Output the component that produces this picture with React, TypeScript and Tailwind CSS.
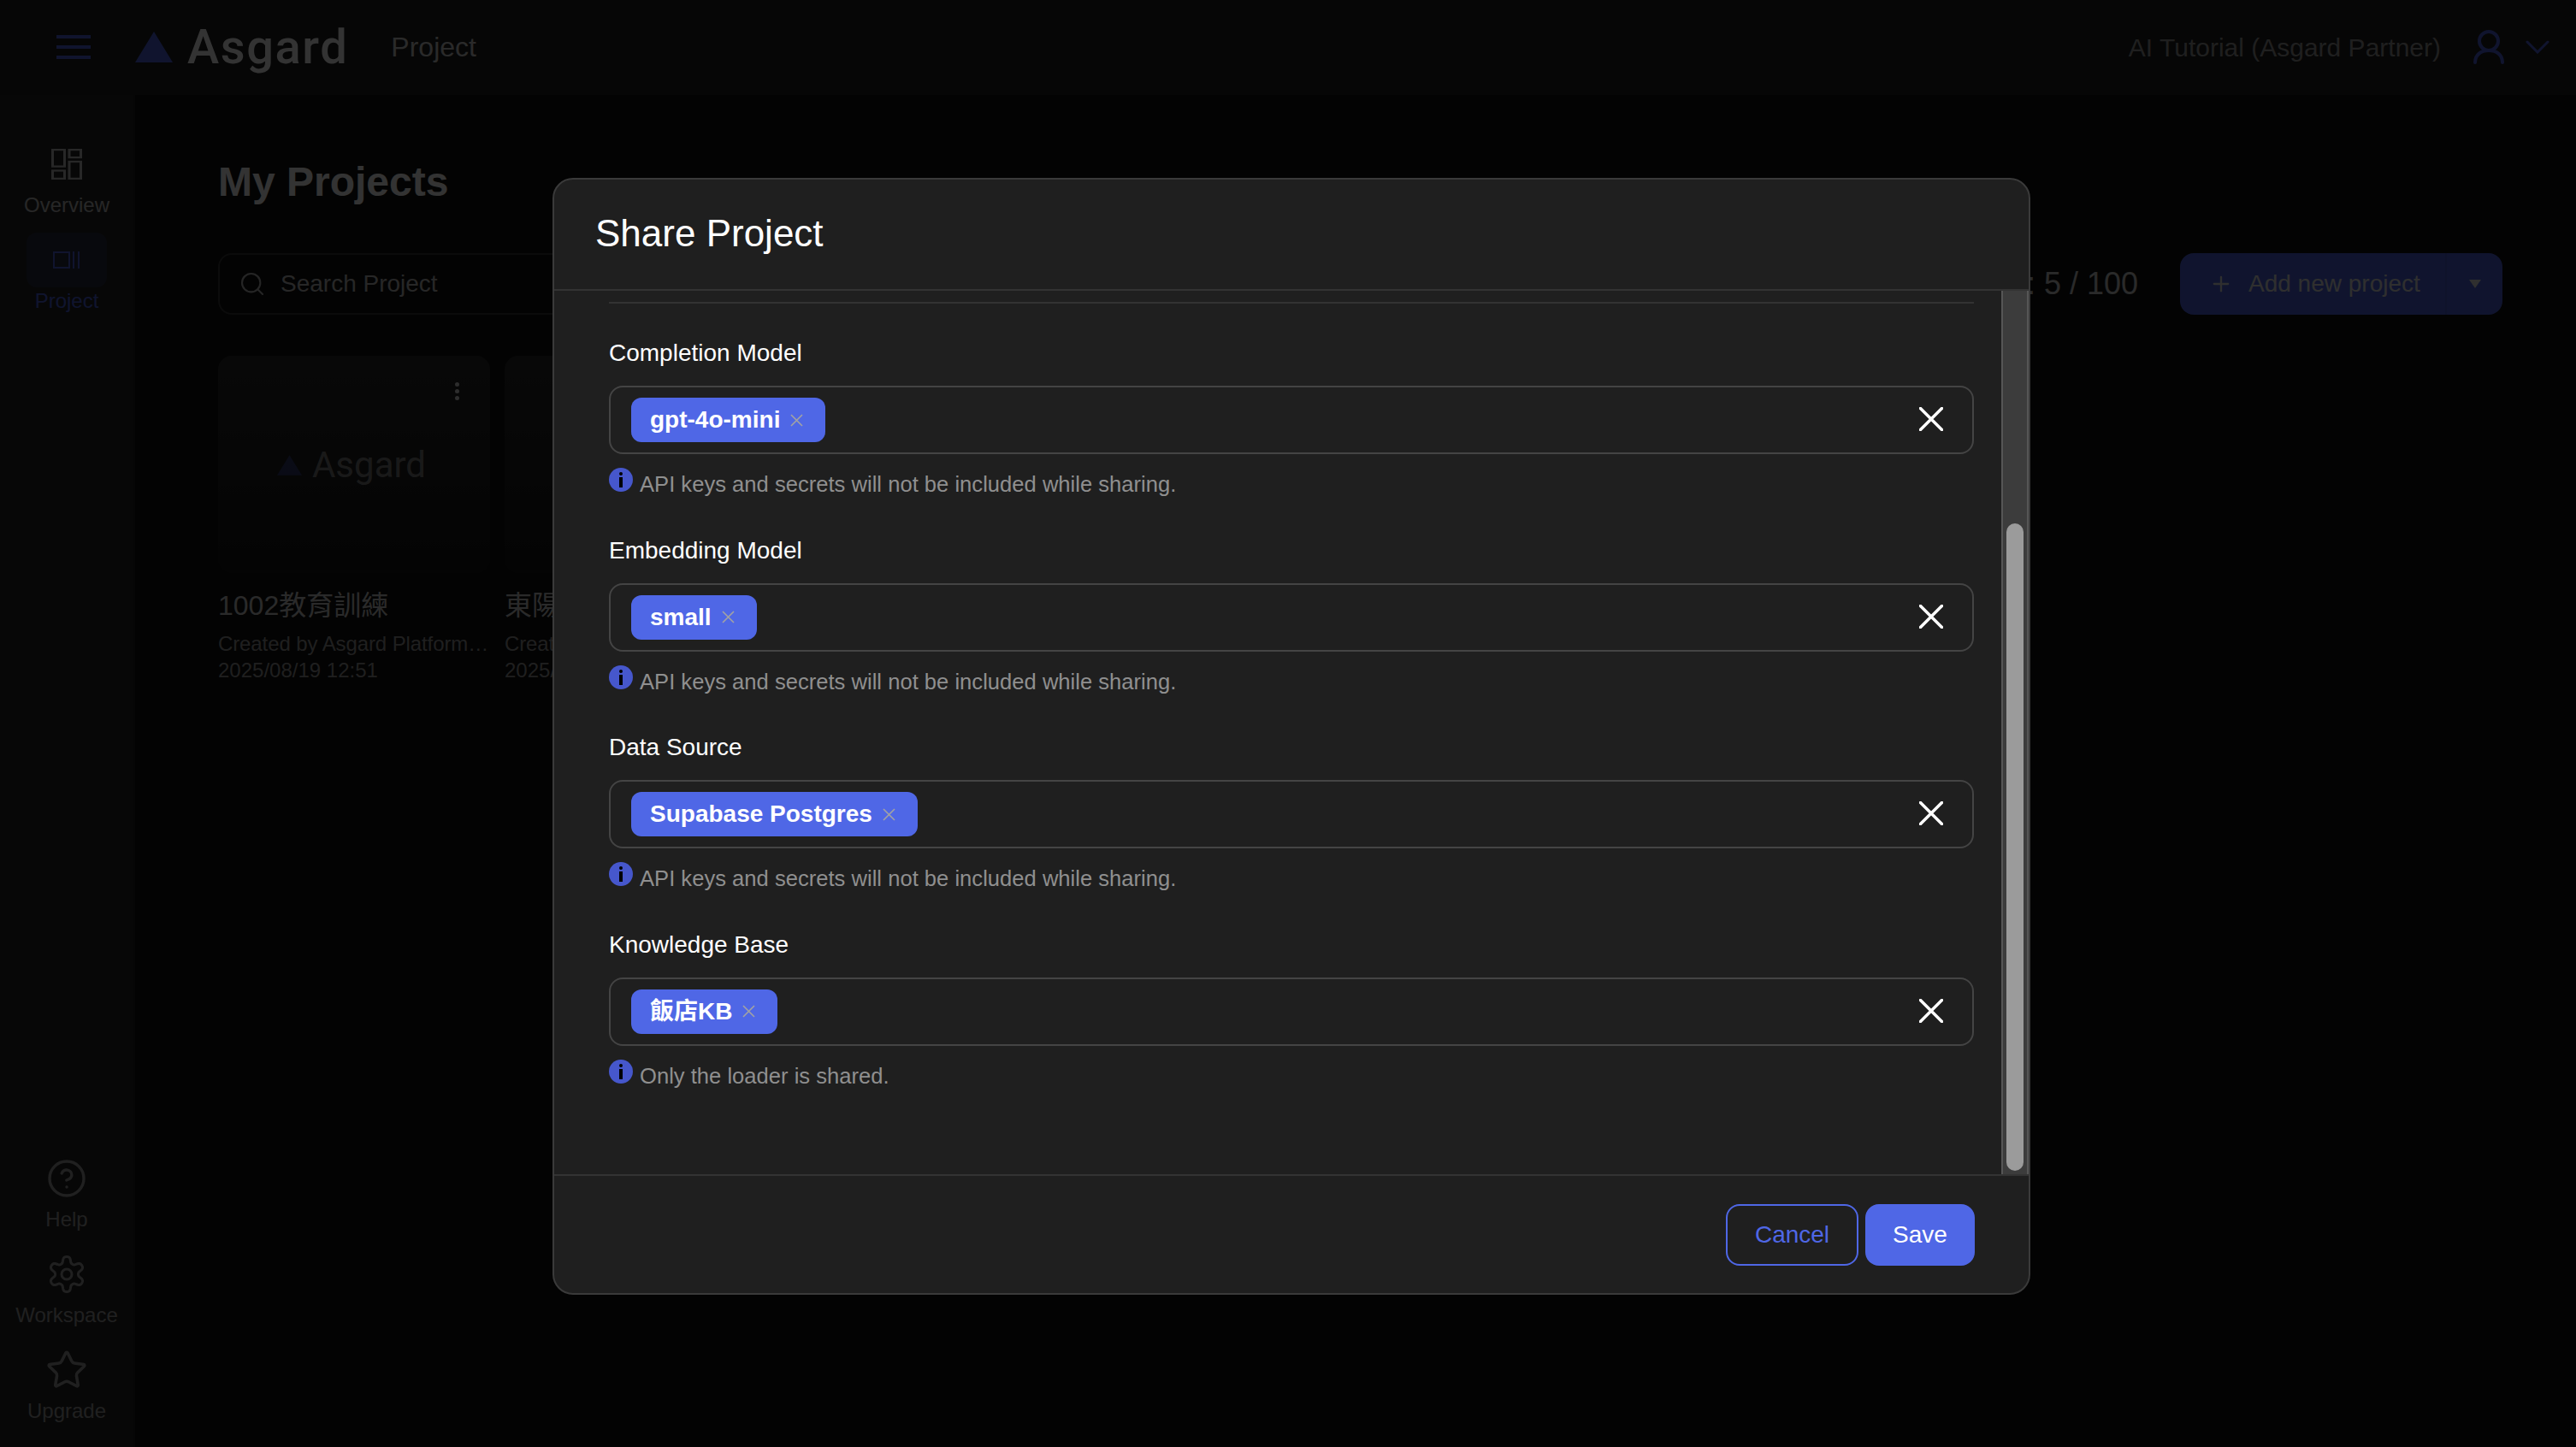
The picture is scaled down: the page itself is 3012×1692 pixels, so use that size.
import type { ReactNode } from "react";
import { CircleHelp, Plus, Search, Star } from "lucide-react";

const FONT = "[font-family:'Liberation_Sans','Noto_Sans_CJK_TC',sans-serif]";

const SECTIONS = [
  { label: "Completion Model", chip: "gpt-4o-mini", note: "API keys and secrets will not be included while sharing." },
  { label: "Embedding Model", chip: "small", note: "API keys and secrets will not be included while sharing." },
  { label: "Data Source", chip: "Supabase Postgres", note: "API keys and secrets will not be included while sharing." },
  { label: "Knowledge Base", chip: "飯店KB", note: "Only the loader is shared." },
];

// six lobed cog outline
function cogPath() {
  const pts: string[] = [];
  for (let i = 0; i < 180; i++) {
    const t = (i / 180) * Math.PI * 2;
    const r = 17 + 3.5 * (Math.tanh(1.6 * Math.cos(6 * t)) / Math.tanh(1.6));
    const x = 24 + r * Math.sin(t);
    const y = 24 - r * Math.cos(t);
    pts.push(`${i === 0 ? "M" : "L"}${x.toFixed(2)} ${y.toFixed(2)}`);
  }
  return pts.join(" ") + " Z";
}

function Triangle({ className }: { className: string }) {
  return (
    <svg viewBox="0 0 44 36" className={className}>
      <path d="M22 0 L44 36 L0 36 Z" fill="currentColor" />
    </svg>
  );
}

function OverviewIcon() {
  return (
    <svg viewBox="0 0 36 48" className="h-[36px] w-[36px]" preserveAspectRatio="none" fill="none" stroke="currentColor" strokeWidth="3">
      <rect x="1.5" y="1.5" width="14" height="26" />
      <rect x="21" y="1.5" width="13.5" height="12" />
      <rect x="1.5" y="34" width="14" height="12.5" />
      <rect x="21" y="20" width="13.5" height="26.5" />
    </svg>
  );
}

function ProjectIcon() {
  return (
    <svg viewBox="0 0 32 20" className="h-[20px] w-[32px]" fill="none" stroke="currentColor" strokeWidth="2">
      <rect x="1" y="1" width="18" height="18" />
      <path d="M24 0V20M30 0V20" />
    </svg>
  );
}

function InfoIcon() {
  return (
    <svg viewBox="0 0 28 28" className="mt-[16px] h-[28px] w-[28px] shrink-0">
      <circle cx="14" cy="14" r="14" fill="#4657cc" />
      <rect x="12" y="11" width="4" height="12" fill="#000" />
      <rect x="12" y="5" width="4" height="4" rx="2" fill="#000" />
    </svg>
  );
}

function Chip({ text }: { text: string }) {
  return (
    <div className="flex h-[52px] items-center gap-[12px] rounded-[12px] bg-[#4f67e6] pl-[22px] pr-[26px]">
      <span className="text-[28px] font-bold text-white">{text}</span>
      <svg viewBox="0 0 15 15" className="h-[15px] w-[15px]" stroke="#a3a3a3" strokeWidth="1.6">
        <path d="M1 1L14 14M14 1L1 14" />
      </svg>
    </div>
  );
}

function ProjectCard({ title, logo }: { title: string; logo?: boolean }) {
  return (
    <div className="w-[318px] shrink-0">
      <div className="relative flex h-[254px] items-center justify-center gap-[12px] rounded-[16px] bg-gradient-to-b from-[#2a2a2a] to-[#161616] pr-[6px] pt-[2px]">
        {logo && (
          <>
            <Triangle className="h-[24px] w-[29px] text-[#4f67e6]/40" />
            <span className="text-[42px] leading-none text-[#9a9a9a]/80 [font-family:Roboto,sans-serif]">Asgard</span>
            <div className="absolute right-[36px] top-[31px] flex flex-col gap-[3px]">
              <span className="h-[5px] w-[5px] rounded-full bg-[#e0e0e0]" />
              <span className="h-[5px] w-[5px] rounded-full bg-[#e0e0e0]" />
              <span className="h-[5px] w-[5px] rounded-full bg-[#e0e0e0]" />
            </div>
          </>
        )}
      </div>
      <p className="mt-[18px] text-[32px] leading-[40px] text-[#d2d2d2]">{title}</p>
      <p className="mt-[9px] truncate text-[24px] leading-[32px] tracking-[-0.1px] text-[#9c9c9c]">Created by Asgard Platform Team</p>
      <p className="text-[24px] leading-[30px] text-[#9c9c9c]">2025/08/19 12:51</p>
    </div>
  );
}

function ModalSection({ label, chip, note }: { label: string; chip: string; note: string }) {
  return (
    <div className="h-[230.67px]">
      <p className="text-[28px] leading-[32px] text-white">{label}</p>
      <div className="mt-[22px] flex h-[80px] items-center justify-between rounded-[16px] border-2 border-[#444444] pl-[24px] pr-[34px]">
        <Chip text={chip} />
        <svg viewBox="0 0 28 28" className="-mt-[2px] h-[28px] w-[28px]" stroke="#ffffff" strokeWidth="3.5" strokeLinecap="round">
          <path d="M1.5 1.5L26.5 26.5M26.5 1.5L1.5 26.5" />
        </svg>
      </div>
      <div className="flex gap-[8px]">
        <InfoIcon />
        <p className="mt-[19px] text-[25.6px] leading-[32px] text-[#8f8f8f]">{note}</p>
      </div>
    </div>
  );
}

function SideItem({ label, children }: { label: string; children: ReactNode }) {
  return (
    <div className="flex flex-col items-center gap-[10px]">
      <div className="flex h-[48px] items-center justify-center">{children}</div>
      <span className="text-[24px] leading-[28px]">{label}</span>
    </div>
  );
}

export default function App() {
  return (
    <div className={`relative flex h-screen w-full flex-col overflow-hidden bg-[#0f0f0f] ${FONT}`}>
      {/* Header */}
      <header className="flex h-[111px] shrink-0 items-center border-b-2 border-[#222222] bg-[#1e1e1e] pl-[66px] pr-[31px]">
        <div className="flex h-[28px] w-[40px] flex-col justify-between">
          <span className="h-[4px] bg-[#4f67e6]" />
          <span className="h-[4px] bg-[#4f67e6]" />
          <span className="h-[4px] bg-[#4f67e6]" />
        </div>
        <Triangle className="ml-[52px] h-[36px] w-[44px] text-[#4f67e6]" />
        <span className="ml-[17px] text-[56px] font-medium leading-none tracking-[1.6px] text-white [font-family:Roboto,sans-serif]">Asgard</span>
        <span className="ml-[50px] text-[32px] text-[#d0d0d0]">Project</span>
        <span className="ml-auto pt-[2px] text-[30px] text-[#9c9c9c]">AI Tutorial (Asgard Partner)</span>
        <svg viewBox="0 0 36 40" className="ml-[38px] h-[40px] w-[36px]" fill="none" stroke="#4f67e6" strokeWidth="4" strokeLinecap="round">
          <circle cx="18" cy="13" r="11" />
          <path d="M2 38C2 29 9 24 18 24C27 24 34 29 34 38" />
        </svg>
        <svg viewBox="0 0 28 16" className="ml-[25px] h-[16px] w-[28px]" fill="none" stroke="#4f67e6" strokeWidth="3" strokeLinecap="round">
          <path d="M2 2L14 14L26 2" />
        </svg>
      </header>

      <div className="flex min-h-0 flex-1">
        {/* Sidebar */}
        <aside className="flex w-[158px] shrink-0 flex-col items-center justify-between border-r-2 border-[#1e1e1e] bg-[#252525] pb-[28px] pt-[63px]">
          <div className="flex flex-col items-center text-[#c0c0c0]">
            <OverviewIcon />
            <span className="mt-[16px] text-[24px] leading-[28px]">Overview</span>
            <div className="mt-[18px] flex h-[64px] w-[94px] items-center justify-center rounded-[12px] bg-[#4f67e6]/15 text-[#4f67e6]">
              <ProjectIcon />
            </div>
            <span className="mt-[2px] text-[24px] leading-[28px] text-[#4f67e6]">Project</span>
          </div>
          <div className="flex flex-col items-center gap-[26px] text-[#a0a0a0]">
            <SideItem label="Help">
              <CircleHelp size={48} strokeWidth={1.7} />
            </SideItem>
            <SideItem label="Workspace">
              <svg viewBox="0 0 48 48" className="h-[48px] w-[48px]" fill="none" stroke="currentColor" strokeWidth="3">
                <path d={cogPath()} strokeLinejoin="round" />
                <circle cx="24" cy="24" r="6" />
              </svg>
            </SideItem>
            <SideItem label="Upgrade">
              <Star size={50} strokeWidth={1.7} />
            </SideItem>
          </div>
        </aside>

        {/* Main */}
        <main className="min-w-0 flex-1 pl-[97px] pr-[86px] pt-[74px]">
          <h1 className="text-[48px] font-bold leading-[56px] text-white">My Projects</h1>
          <div className="mt-[55px] flex items-center justify-between">
            <div className="flex h-[72px] w-[600px] items-center gap-[17px] rounded-[16px] border-2 border-[#383838] pl-[22px]">
              <Search size={32} strokeWidth={1.6} className="text-[#b8b8b8]" />
              <span className="text-[28px] text-[#c0c0c0]">Search Project</span>
            </div>
            <div className="flex items-center gap-[49px]">
              <span className="text-[36px] text-[#d0d0d0]">Projects: 5 / 100</span>
              <div className="flex h-[72px] w-[377px] items-center rounded-[16px] bg-[#4f67e6] text-[#e8e8e8]">
                <div className="flex h-full flex-1 items-center gap-[18px] border-r-2 border-[#4a60d8] pl-[34px]">
                  <Plus size={28} strokeWidth={2} />
                  <span className="text-[28px]">Add new project</span>
                </div>
                <div className="flex w-[65px] justify-center">
                  <span className="h-0 w-0 border-x-[7px] border-t-[10px] border-x-transparent border-t-[#e8e8e8]" />
                </div>
              </div>
            </div>
          </div>
          <div className="mt-[48px] flex gap-[17px]">
            <ProjectCard title="1002教育訓練" logo />
            <ProjectCard title="東陽專案" />
          </div>
        </main>
      </div>

      {/* Backdrop */}
      <div className="absolute inset-0 bg-black/80" />

      {/* Share Project modal */}
      <div className="absolute left-[646px] top-[208px] flex h-[1306px] w-[1728px] flex-col rounded-[24px] border-2 border-[#3a3a3a] bg-[#1f1f1f]">
        <div className="flex h-[130px] shrink-0 items-center border-b-2 border-[#333333] pb-[2px] pl-[48px]">
          <h2 className="text-[44px] leading-[56px] text-white">Share Project</h2>
        </div>
        <div className="flex min-h-0 flex-1">
          <div className="min-w-0 flex-1 overflow-hidden pl-[64px] pr-[32px] pt-[13px]">
            <div className="mb-[42px] h-[2px] bg-[#333333]" />
            {SECTIONS.map((s) => (
              <ModalSection key={s.label} label={s.label} chip={s.chip} note={s.note} />
            ))}
          </div>
          {/* Scrollbar */}
          <div className="w-[32px] shrink-0 border-x-2 border-[#565656] bg-[#3c3c3c] px-[4px] pt-[272px]">
            <div className="h-[757px] rounded-full bg-[#9b9b9b]" />
          </div>
        </div>
        <div className="flex h-[139px] shrink-0 items-center justify-end gap-[8px] border-t-2 border-[#333333] pr-[63px]">
          <button className="h-[72px] w-[155px] rounded-[16px] border-2 border-[#4f67e6] text-[28px] text-[#4f67e6]">Cancel</button>
          <button className="h-[72px] w-[128px] rounded-[16px] bg-[#4f67e6] text-[28px] text-white">Save</button>
        </div>
      </div>
    </div>
  );
}
